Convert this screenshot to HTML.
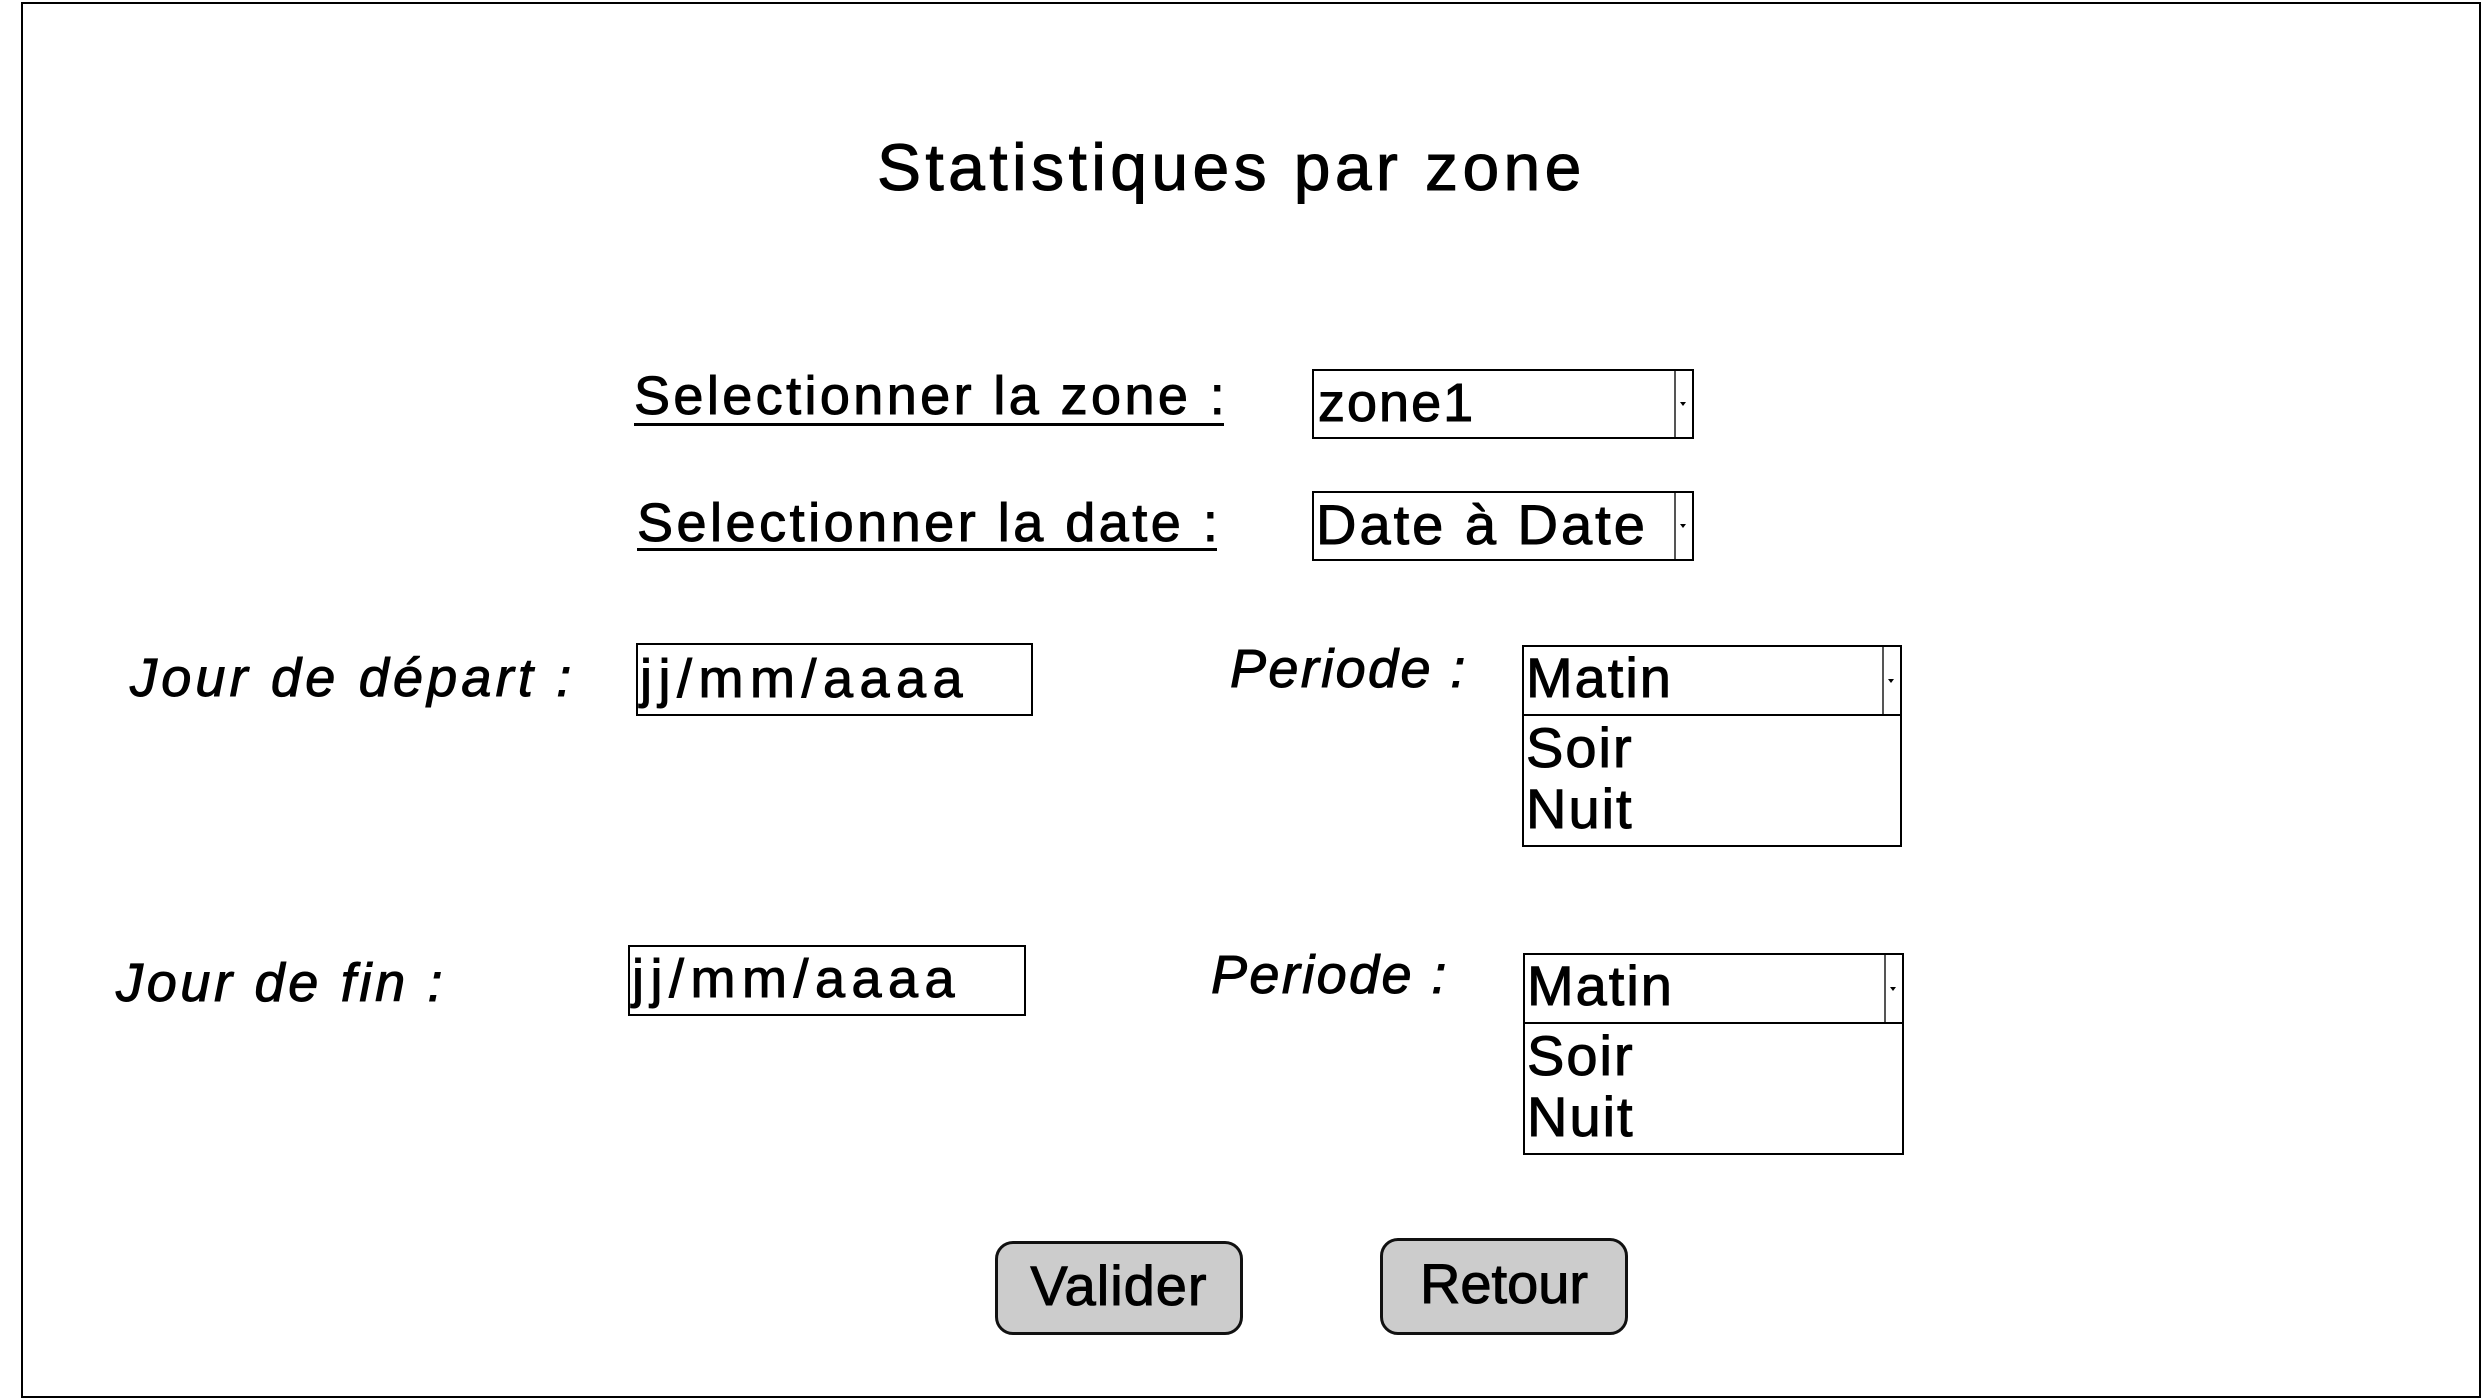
<!DOCTYPE html>
<html><head><meta charset="utf-8"><style>
html,body{margin:0;padding:0;background:#fff;}
body{width:2485px;height:1400px;position:relative;overflow:hidden;font-family:"Liberation Sans",sans-serif;color:#000;}
.t{position:absolute;line-height:1;white-space:nowrap;-webkit-text-stroke:1px #000;}
.b{position:absolute;border:2px solid #000;box-sizing:border-box;background:#fff;}
.dd{position:absolute;top:0;bottom:0;width:16px;right:0;border-left:2px solid #555;}
.dd:after{content:"";position:absolute;left:4px;top:50%;margin-top:-2px;border-left:3px solid transparent;border-right:3px solid transparent;border-top:4px solid #000;}
.btn{position:absolute;background:#cccccc;border:3px solid #111;border-radius:18px;box-sizing:border-box;text-align:center;font-size:56px;-webkit-text-stroke:1px #000;}
i{font-style:italic;}
</style></head><body>
<div style="position:absolute;left:21px;top:2px;width:2460px;height:1396px;border:2px solid #000;box-sizing:border-box;"></div>

<div class="t" style="left:877px;top:134px;font-size:66px;letter-spacing:4.4px;">Statistiques par zone</div>

<div class="t" style="left:634px;top:369px;font-size:54px;letter-spacing:3.4px;">Selectionner la zone :</div>
<div style="position:absolute;left:634px;top:423px;width:590px;height:3px;background:#000"></div>
<div class="t" style="left:637px;top:496px;font-size:54px;letter-spacing:3.5px;">Selectionner la date :</div>
<div style="position:absolute;left:637px;top:548px;width:580px;height:3px;background:#000"></div>

<div class="b" style="left:1312px;top:369px;width:382px;height:70px;"><div class="dd"></div></div>
<div class="t" style="left:1318px;top:376px;font-size:54px;letter-spacing:2px;">zone1</div>
<div class="b" style="left:1312px;top:491px;width:382px;height:70px;"><div class="dd"></div></div>
<div class="t" style="left:1316px;top:497px;font-size:56px;letter-spacing:3px;">Date à Date</div>

<div class="t" style="left:130px;top:651px;font-size:54px;letter-spacing:4.2px;"><i>Jour de départ :</i></div>
<div class="b" style="left:636px;top:643px;width:397px;height:73px;"></div>
<div class="t" style="left:640px;top:652px;font-size:54px;letter-spacing:6.5px;">jj/mm/aaaa</div>
<div class="t" style="left:1230px;top:642px;font-size:54px;letter-spacing:2.4px;"><i>Periode :</i></div>
<div class="b" style="left:1522px;top:645px;width:380px;height:72px;"><div class="dd"></div></div>
<div class="b" style="left:1522px;top:714px;width:380px;height:133px;"></div>
<div class="t" style="left:1526px;top:650px;font-size:56px;letter-spacing:2px;">Matin</div>
<div class="t" style="left:1526px;top:720px;font-size:56px;letter-spacing:2px;">Soir</div>
<div class="t" style="left:1526px;top:781px;font-size:56px;letter-spacing:2px;">Nuit</div>

<div class="t" style="left:116px;top:956px;font-size:54px;letter-spacing:3.7px;"><i>Jour de fin :</i></div>
<div class="b" style="left:628px;top:945px;width:398px;height:71px;"></div>
<div class="t" style="left:632px;top:952px;font-size:54px;letter-spacing:6.5px;">jj/mm/aaaa</div>
<div class="t" style="left:1211px;top:948px;font-size:54px;letter-spacing:2.4px;"><i>Periode :</i></div>
<div class="b" style="left:1523px;top:953px;width:381px;height:72px;"><div class="dd"></div></div>
<div class="b" style="left:1523px;top:1022px;width:381px;height:133px;"></div>
<div class="t" style="left:1527px;top:958px;font-size:56px;letter-spacing:2px;">Matin</div>
<div class="t" style="left:1527px;top:1028px;font-size:56px;letter-spacing:2px;">Soir</div>
<div class="t" style="left:1527px;top:1089px;font-size:56px;letter-spacing:2px;">Nuit</div>

<div class="btn" style="left:995px;top:1241px;width:248px;height:94px;line-height:84px;letter-spacing:1px;">Valider</div>
<div class="btn" style="left:1380px;top:1238px;width:248px;height:97px;line-height:86px;">Retour</div>
</body></html>
